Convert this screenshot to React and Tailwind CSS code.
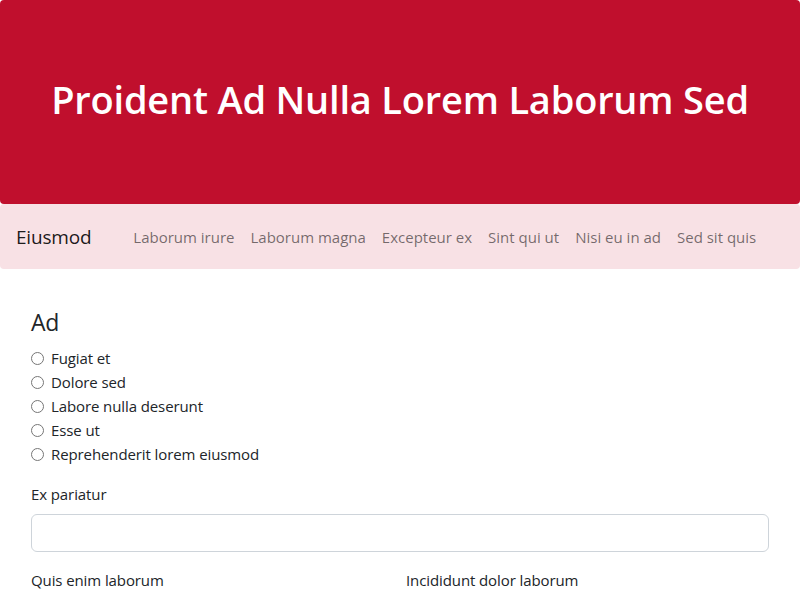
import { useState } from 'react';

const navLinks = ['Laborum irure', 'Laborum magna', 'Excepteur ex', 'Sint qui ut', 'Nisi eu in ad', 'Sed sit quis'];
const options = ['Fugiat et', 'Dolore sed', 'Labore nulla deserunt', 'Esse ut', 'Reprehenderit lorem eiusmod'];

export default function App() {
  const [choice, setChoice] = useState(null);

  return (
    <div className="min-h-screen bg-white text-[#212529] font-['Open_Sans',sans-serif]">
      {/* Hero */}
      <header className="h-[204px] rounded-[4px] bg-[#c00f2d] flex items-center justify-center pb-1">
        <h1 className="text-[38px] font-semibold text-white leading-[1.2] tracking-[-0.2px]">
          Proident Ad Nulla Lorem Laborum Sed
        </h1>
      </header>

      {/* Navbar */}
      <nav className="h-[65px] rounded-[4px] bg-[#f8e1e5] flex items-center px-4 pt-[1px]">
        <span className="text-[19px] text-black/90 mr-[42px] tracking-[-0.2px]">Eiusmod</span>
        <ul className="flex gap-[16px]">
          {navLinks.map((l) => (
            <li key={l} className="text-[15px] text-black/55">{l}</li>
          ))}
        </ul>
      </nav>

      {/* Form */}
      <main className="px-[31px] pt-[40px]">
        <h2 className="text-[23px] leading-[1.2] mb-[10px] tracking-[-0.2px]">Ad</h2>
        <div className="flex flex-col">
          {options.map((o) => (
            <label key={o} className="flex items-center h-6 text-[15px] tracking-[-0.1px]">
              <input
                type="radio"
                name="ad"
                checked={choice === o}
                onChange={() => setChoice(o)}
                className="w-[13px] h-[13px] m-0 mr-[7px] accent-[#c00f2d]"
              />
              {o}
            </label>
          ))}
        </div>

        <div className="mt-[15px]">
          <label className="block text-[15px] leading-6 mb-[8px] tracking-[-0.1px]">Ex pariatur</label>
          <input type="text" className="block w-full h-[38px] rounded-[6px] border border-[#ced4da] px-3 outline-none" />
        </div>

        <div className="grid grid-cols-2 gap-3 mt-[16px]">
          <label className="text-[15px] leading-6 tracking-[-0.1px]">Quis enim laborum</label>
          <label className="text-[15px] leading-6 tracking-[-0.1px]">Incididunt dolor laborum</label>
        </div>
      </main>
    </div>
  );
}
